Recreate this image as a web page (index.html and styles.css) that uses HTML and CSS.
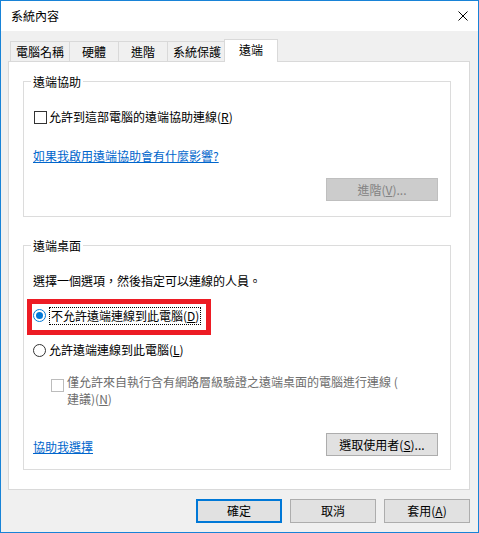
FILE: index.html
```html
<!DOCTYPE html>
<html lang="zh-Hant">
<head>
<meta charset="utf-8">
<title>系統內容</title>
<link rel="stylesheet" href="styles.css">
</head>
<body>
<div class="window">
  <div class="titlebar">
    <span class="title">系統內容</span>
    <svg class="close" width="10" height="10" viewBox="0 0 10 10"><path d="M0.5 0.5 L9.5 9.5 M9.5 0.5 L0.5 9.5" stroke="#000" stroke-width="1" fill="none"/></svg>
  </div>
  <div class="body">
    <div class="tabs">
      <div class="tab">電腦名稱</div>
      <div class="tab">硬體</div>
      <div class="tab">進階</div>
      <div class="tab">系統保護</div>
      <div class="tab tab-active">遠端</div>
    </div>
    <div class="panel">
      <div class="group group-assist">
        <div class="legend">遠端協助</div>
        <div class="option option-assist"><span class="checkbox"></span><span>允許到這部電腦的遠端協助連線(<u>R</u>)</span></div>
        <a class="link link-assist">如果我啟用遠端協助會有什麼影響?</a>
        <div class="button-row button-row-assist"><button class="btn btn-wide btn-disabled">進階(<u>V</u>)...</button></div>
      </div>
      <div class="group group-desktop">
        <div class="legend">遠端桌面</div>
        <div class="desc">選擇一個選項，然後指定可以連線的人員。</div>
        <div class="highlight">
          <span class="radio radio-checked"></span><span class="focus">不允許遠端連線到此電腦(<u>D</u>)</span>
        </div>
        <div class="option option-allow"><span class="radio"></span><span>允許遠端連線到此電腦(<u>L</u>)</span></div>
        <div class="option option-nla"><span class="checkbox checkbox-disabled"></span><span class="nla-text">僅允許來自執行含有網路層級驗證之遠端桌面的電腦進行連線 (<br>建議)(<u>N</u>)</span></div>
        <div class="bottom-row">
          <a class="link link-help">協助我選擇</a>
          <button class="btn btn-wide">選取使用者(<u>S</u>)...</button>
        </div>
      </div>
    </div>
    <div class="footer">
      <button class="btn btn-footer btn-default">確定</button>
      <button class="btn btn-footer">取消</button>
      <button class="btn btn-footer">套用(<u>A</u>)</button>
    </div>
  </div>
</div>
</body>
</html>
```
FILE: styles.css
```css
* { box-sizing: border-box; }
html, body { margin: 0; padding: 0; }
body {
  font-family: "Noto Sans CJK TC", "Noto Sans", sans-serif;
  font-size: 12px;
  line-height: 16px;
  color: #000;
  background: #fff;
}
.window {
  width: 479px;
  height: 533px;
  border: 1px solid #1883d7;
  background: #f0f0f0;
  display: flex;
  flex-direction: column;
}
.titlebar {
  height: 30px;
  background: #fff;
  display: flex;
  align-items: center;
  justify-content: space-between;
  padding: 0 10px 0 10px;
}
.close { display: block; margin-bottom: 1px; }
.body {
  padding: 8px 8px 0 7px;
}
.tabs {
  height: 22px;
  display: flex;
  align-items: flex-end;
  padding-left: 2px;
}
.tab {
  height: 20px;
  min-width: 50px;
  padding: 0 5px;
  border: 1px solid #d9d9d9;
  border-bottom: none;
  margin-right: -1px;
  line-height: 19px;
  text-align: center;
  background: #f0f0f0;
}
.tab-active {
  height: 23px;
  min-width: 54px;
  margin: 0 -2px -1px -2px;
  background: #fff;
  position: relative;
  z-index: 1;
  line-height: 19px;
}
.panel {
  height: 429px;
  background: #fff;
  border: 1px solid #d9d9d9;
  padding: 0 18px 0 14px;
}
.group {
  border: 1px solid #dcdcdc;
  padding: 0 12px 0 9px;
}
.group-assist { margin-top: 19px; padding-bottom: 15px; }
.group-desktop { margin-top: 28px; padding-bottom: 13px; }
.legend {
  display: table;
  margin: -8px 0 0 -2px;
  padding: 0 2px;
  background: #fff;
}
.option {
  display: flex;
  align-items: center;
}
.option-assist { margin-top: 19px; }
.checkbox {
  width: 13px;
  height: 13px;
  border: 1px solid #333;
  background: #fff;
  margin: 0 2px 0 1px;
  flex: none;
}
.checkbox-disabled { border-color: #bcbcbc; }
.link {
  display: table;
  color: #0066cc;
  text-decoration: underline;
}
.link-assist { margin-top: 23px; }
.button-row { display: flex; justify-content: flex-end; }
.button-row-assist { margin-top: 14px; }
.btn {
  font: inherit;
  color: #000;
  height: 23px;
  padding: 0;
  border: 1px solid #adadad;
  background: #e1e1e1;
  text-align: center;
  line-height: 20px;
}
.btn-wide { width: 112px; }
.btn-disabled {
  background: #cccccc;
  border-color: #bfbfbf;
  color: #838383;
}
.desc { margin-top: 19px; }
.highlight {
  margin: 10px 0 0 -6px;
  width: 184px;
  height: 36px;
  border: 5px solid #ed1c24;
  padding: 0 0 3px 1px;
  display: flex;
  align-items: center;
}
.radio {
  width: 13px;
  height: 13px;
  border: 1px solid #333;
  border-radius: 50%;
  background: #fff;
  margin-right: 3px;
  flex: none;
  display: flex;
  align-items: center;
  justify-content: center;
}
.radio-checked { border-color: #0078d7; }
.radio-checked::after {
  content: "";
  width: 7px;
  height: 7px;
  border-radius: 50%;
  background: #0078d7;
}
.focus {
  border: 1px dotted #000;
  padding: 0 1px;
  line-height: 16px;
}
.option-allow { margin-top: 7px; }
.option-nla {
  margin-top: 15px;
  align-items: flex-start;
}
.option-nla .checkbox { margin: 6px 3px 0 18px; }
.nla-text { color: #6d6d6d; line-height: 17px; }
.bottom-row {
  margin-top: 26px;
  display: flex;
  justify-content: space-between;
  align-items: flex-start;
}
.link-help { margin-top: 6px; }
.footer {
  margin-top: 9px;
  display: flex;
  justify-content: flex-end;
  gap: 8px;
}
.btn-footer { width: 86px; height: 24px; }
.btn-default { border: 2px solid #0078d7; }
```
